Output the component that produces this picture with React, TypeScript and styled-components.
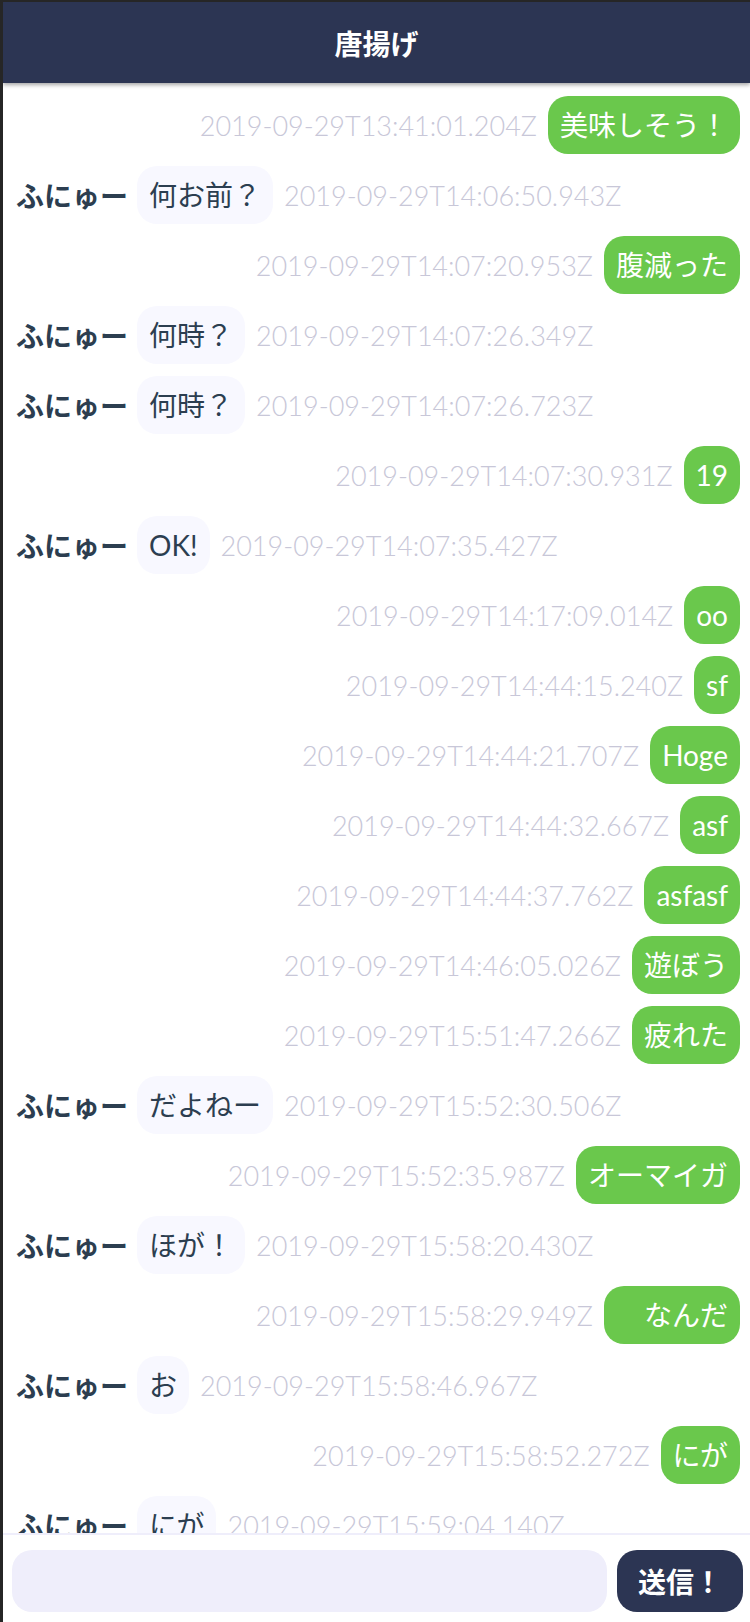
import React from "react";
import styled, { createGlobalStyle } from "styled-components";

const GlobalStyle = createGlobalStyle`
  html, body { margin: 0; padding: 0; height: 100%; background: #ffffff; }
  #root { height: 100%; }
  * { box-sizing: border-box; }
`;

const FONT = `Lato, "Noto Sans CJK JP", sans-serif`;

type Message = { mine: boolean; text: string; time: string };

const messages: Message[] = [
  { mine: true, text: "美味しそう！", time: "2019-09-29T13:41:01.204Z" },
  { mine: false, text: "何お前？", time: "2019-09-29T14:06:50.943Z" },
  { mine: true, text: "腹減った", time: "2019-09-29T14:07:20.953Z" },
  { mine: false, text: "何時？", time: "2019-09-29T14:07:26.349Z" },
  { mine: false, text: "何時？", time: "2019-09-29T14:07:26.723Z" },
  { mine: true, text: "19", time: "2019-09-29T14:07:30.931Z" },
  { mine: false, text: "OK!", time: "2019-09-29T14:07:35.427Z" },
  { mine: true, text: "oo", time: "2019-09-29T14:17:09.014Z" },
  { mine: true, text: "sf", time: "2019-09-29T14:44:15.240Z" },
  { mine: true, text: "Hoge", time: "2019-09-29T14:44:21.707Z" },
  { mine: true, text: "asf", time: "2019-09-29T14:44:32.667Z" },
  { mine: true, text: "asfasf", time: "2019-09-29T14:44:37.762Z" },
  { mine: true, text: "遊ぼう", time: "2019-09-29T14:46:05.026Z" },
  { mine: true, text: "疲れた", time: "2019-09-29T15:51:47.266Z" },
  { mine: false, text: "だよねー", time: "2019-09-29T15:52:30.506Z" },
  { mine: true, text: "オーマイガ", time: "2019-09-29T15:52:35.987Z" },
  { mine: false, text: "ほが！", time: "2019-09-29T15:58:20.430Z" },
  { mine: true, text: "　なんだ", time: "2019-09-29T15:58:29.949Z" },
  { mine: false, text: "お", time: "2019-09-29T15:58:46.967Z" },
  { mine: true, text: "にが", time: "2019-09-29T15:58:52.272Z" },
  { mine: false, text: "にが", time: "2019-09-29T15:59:04.140Z" },
];

const Frame = styled.div`
  height: 100vh;
  display: flex;
  flex-direction: column;
  border-left: 3px solid #262626;
  border-top: 2px solid #262626;
  font-family: ${FONT};
  overflow: hidden;
`;

const Header = styled.header`
  flex: 0 0 81px;
  background: #2c3553;
  color: #ffffff;
  display: flex;
  align-items: center;
  justify-content: center;
  font-size: 28px;
  font-weight: 700;
  box-shadow: 0 2px 4px rgba(0, 0, 0, 0.35);
  position: relative;
  z-index: 1;
`;

const List = styled.main`
  flex: 1;
  min-height: 0;
  overflow-y: auto;
  padding: 13px 10px 0 13px;
  display: flex;
  flex-direction: column;
  gap: 12px;
  scrollbar-width: none;
  &::-webkit-scrollbar { display: none; }
`;

const Row = styled.div<{ $mine: boolean }>`
  display: flex;
  align-items: center;
  flex-direction: ${(p) => (p.$mine ? "row-reverse" : "row")};
  gap: 11px;
  flex-shrink: 0;
`;

const Name = styled.span`
  font-family: "Noto Sans CJK JP", sans-serif;
  font-weight: 700;
  font-size: 28px;
  color: #2c3e50;
  margin-right: -2px;
`;

const Bubble = styled.div<{ $mine: boolean }>`
  font-size: 28px;
  line-height: 42px;
  padding: 8px 12px;
  border-radius: 20px;
  white-space: pre;
  background: ${(p) => (p.$mine ? "#6ac84c" : "#f8f8ff")};
  color: ${(p) => (p.$mine ? "#ffffff" : "#2c3e50")};
`;

const Time = styled.span`
  font-size: 27px;
  font-weight: 300;
  color: #c8c7d8;
  white-space: nowrap;
`;

const Footer = styled.footer`
  flex: 0 0 89px;
  border-top: 2px solid #efeefb;
  padding: 15px 7px 10px 9px;
  display: flex;
  gap: 10px;
  background: #ffffff;
`;

const Input = styled.input`
  flex: 1;
  height: 62px;
  border: none;
  outline: none;
  border-radius: 20px;
  background: #efeefb;
  font-family: ${FONT};
  font-size: 28px;
  padding: 0 16px;
`;

const SendButton = styled.button`
  height: 62px;
  border: none;
  border-radius: 20px;
  background: #2c3553;
  color: #ffffff;
  font-family: "Noto Sans CJK JP", sans-serif;
  font-weight: 700;
  font-size: 28px;
  padding: 0 21px;
`;

export default function App() {
  return (
    <>
      <GlobalStyle />
      <Frame>
        <Header>唐揚げ</Header>
        <List>
          {messages.map((m, i) => (
            <Row key={i} $mine={m.mine}>
              {!m.mine && <Name>ふにゅー</Name>}
              <Bubble $mine={m.mine}>{m.text}</Bubble>
              <Time>{m.time}</Time>
            </Row>
          ))}
        </List>
        <Footer>
          <Input type="text" />
          <SendButton>送信！</SendButton>
        </Footer>
      </Frame>
    </>
  );
}
